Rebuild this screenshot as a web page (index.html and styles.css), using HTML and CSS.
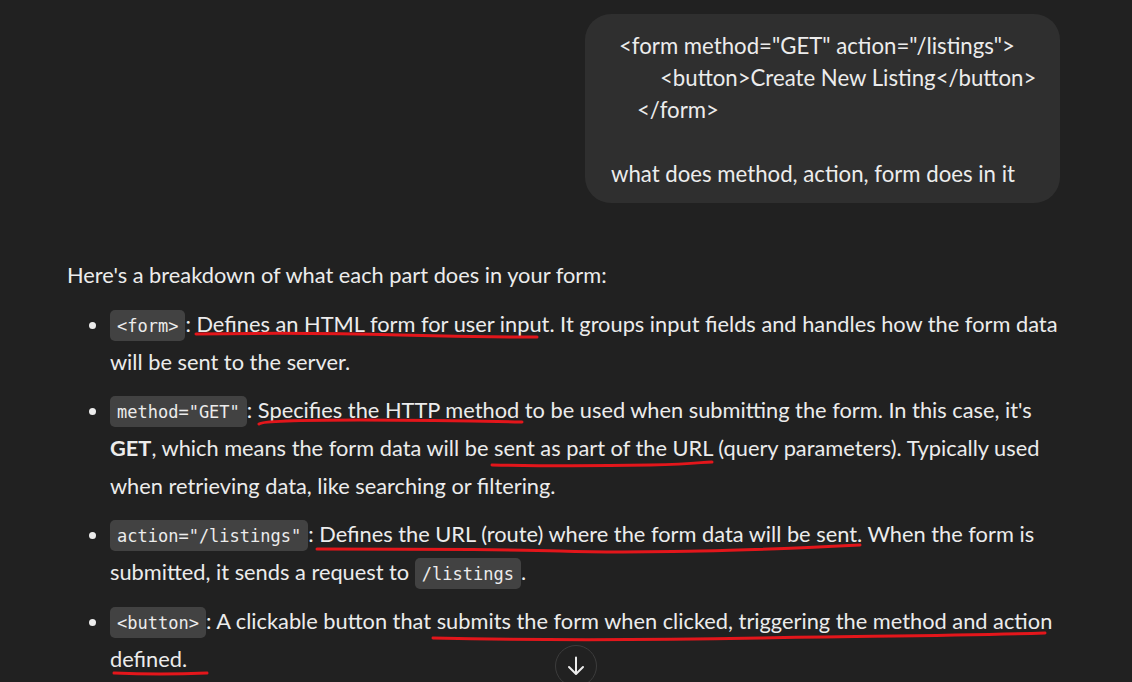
FILE: index.html
```html
<!DOCTYPE html>
<html lang="en">
<head>
<meta charset="utf-8">
<title>Chat</title>
<link rel="stylesheet" href="styles.css">
</head>
<body>
<main class="thread">
  <div class="user-row">
    <div class="bubble">
      <div class="line ind-1">&lt;form method="GET" action="/listings"&gt;</div>
      <div class="line ind-2">&lt;button&gt;Create New Listing&lt;/button&gt;</div>
      <div class="line ind-3">&lt;/form&gt;</div>
      <div class="line">&nbsp;</div>
      <div class="line">what does method, action, form does in it</div>
    </div>
  </div>

  <div class="answer">
    <p class="intro">Here's a breakdown of what each part does in your form:</p>
    <ul class="points">
      <li><code>&lt;form&gt;</code>: Defines an HTML form for user input. It groups input fields and handles how the form data will be sent to the server.</li>
      <li><code>method="GET"</code>: Specifies the HTTP method to be used when submitting the form. In this case, it's <strong>GET</strong>, which means the form data will be sent as part of the URL (query parameters). Typically used when retrieving data, like searching or filtering.</li>
      <li><code>action="/listings"</code>: Defines the URL (route) where the form data will be sent. When the form is submitted, it sends a request to <code>/listings</code>.</li>
      <li><code>&lt;button&gt;</code>: A clickable button that submits the form when clicked, triggering the method and action defined.</li>
    </ul>
  </div>
</main>

<svg class="marks" width="1132" height="682" viewBox="0 0 1132 682" aria-hidden="true">
  <path d="M196 334 C 260 333, 330 333, 400 335 S 500 337, 537 337"/>
  <path d="M259 424 C 262 421, 300 420, 360 420 S 480 421, 522 422"/>
  <path d="M492 465 C 540 466, 600 466, 650 465 S 700 462, 712 462"/>
  <path d="M317 549 C 400 549, 500 549, 560 551 S 640 552, 700 551 S 820 547, 860 545"/>
  <path d="M433 638 C 520 640, 650 640, 760 638 S 960 636, 1045 633"/>
  <path d="M114 673 C 140 674, 180 674, 207 673"/>
</svg>

<button class="scroll-down" aria-label="Scroll to bottom">
  <svg width="24" height="24" viewBox="0 0 24 24"><path d="M12 3.5v16M5 13l7 7 7-7"/></svg>
</button>
</body>
</html>
```

FILE: styles.css
```css
html, body {
  margin: 0;
  padding: 0;
  background: #212121;
}

body {
  position: relative;
  width: 1132px;
  height: 682px;
  overflow: hidden;
  color: #ececec;
  font-family: "Lato", "Noto Sans", sans-serif;
  font-size: 21.8px;
}

.thread {
  display: flex;
  flex-direction: column;
  padding: 14px 72px 0 67px;
}

.user-row {
  display: flex;
  justify-content: flex-end;
}

.bubble {
  width: 475px;
  box-sizing: border-box;
  background: #2f2f2f;
  border-radius: 26px;
  padding: 16px 26px 13px 26px;
  line-height: 32px;
  font-size: 22.2px;
}

.line {
  white-space: nowrap;
}

.ind-1 { padding-left: 8px; }
.ind-2 { padding-left: 49px; }
.ind-3 { padding-left: 26px; }

.answer {
  margin-top: 53px;
  line-height: 37.8px;
}

.intro {
  margin: 0 0 11px 0;
}

.points {
  margin: 0;
  padding-left: 43px;
}

.points li {
  margin-bottom: 10.8px;
}

.points li::marker {
  color: #ececec;
}

code {
  font-family: "DejaVu Sans Mono", "Liberation Mono", monospace;
  font-size: 17px;
  line-height: 1;
  background: #424242;
  border-radius: 5px;
  padding: 6px 7px 5px;
}

strong {
  font-weight: 700;
}

.marks {
  position: absolute;
  left: 0;
  top: 0;
  pointer-events: none;
}

.marks path {
  fill: none;
  stroke: #e3161b;
  stroke-width: 3;
  stroke-linecap: round;
}

.scroll-down {
  position: absolute;
  left: 555px;
  top: 645px;
  width: 42px;
  height: 42px;
  padding: 0;
  border-radius: 50%;
  border: 1px solid #3c3c3c;
  background: #212121;
  display: flex;
  align-items: center;
  justify-content: center;
}

.scroll-down svg path {
  fill: none;
  stroke: #ececec;
  stroke-width: 2;
  stroke-linecap: round;
  stroke-linejoin: round;
}
```
